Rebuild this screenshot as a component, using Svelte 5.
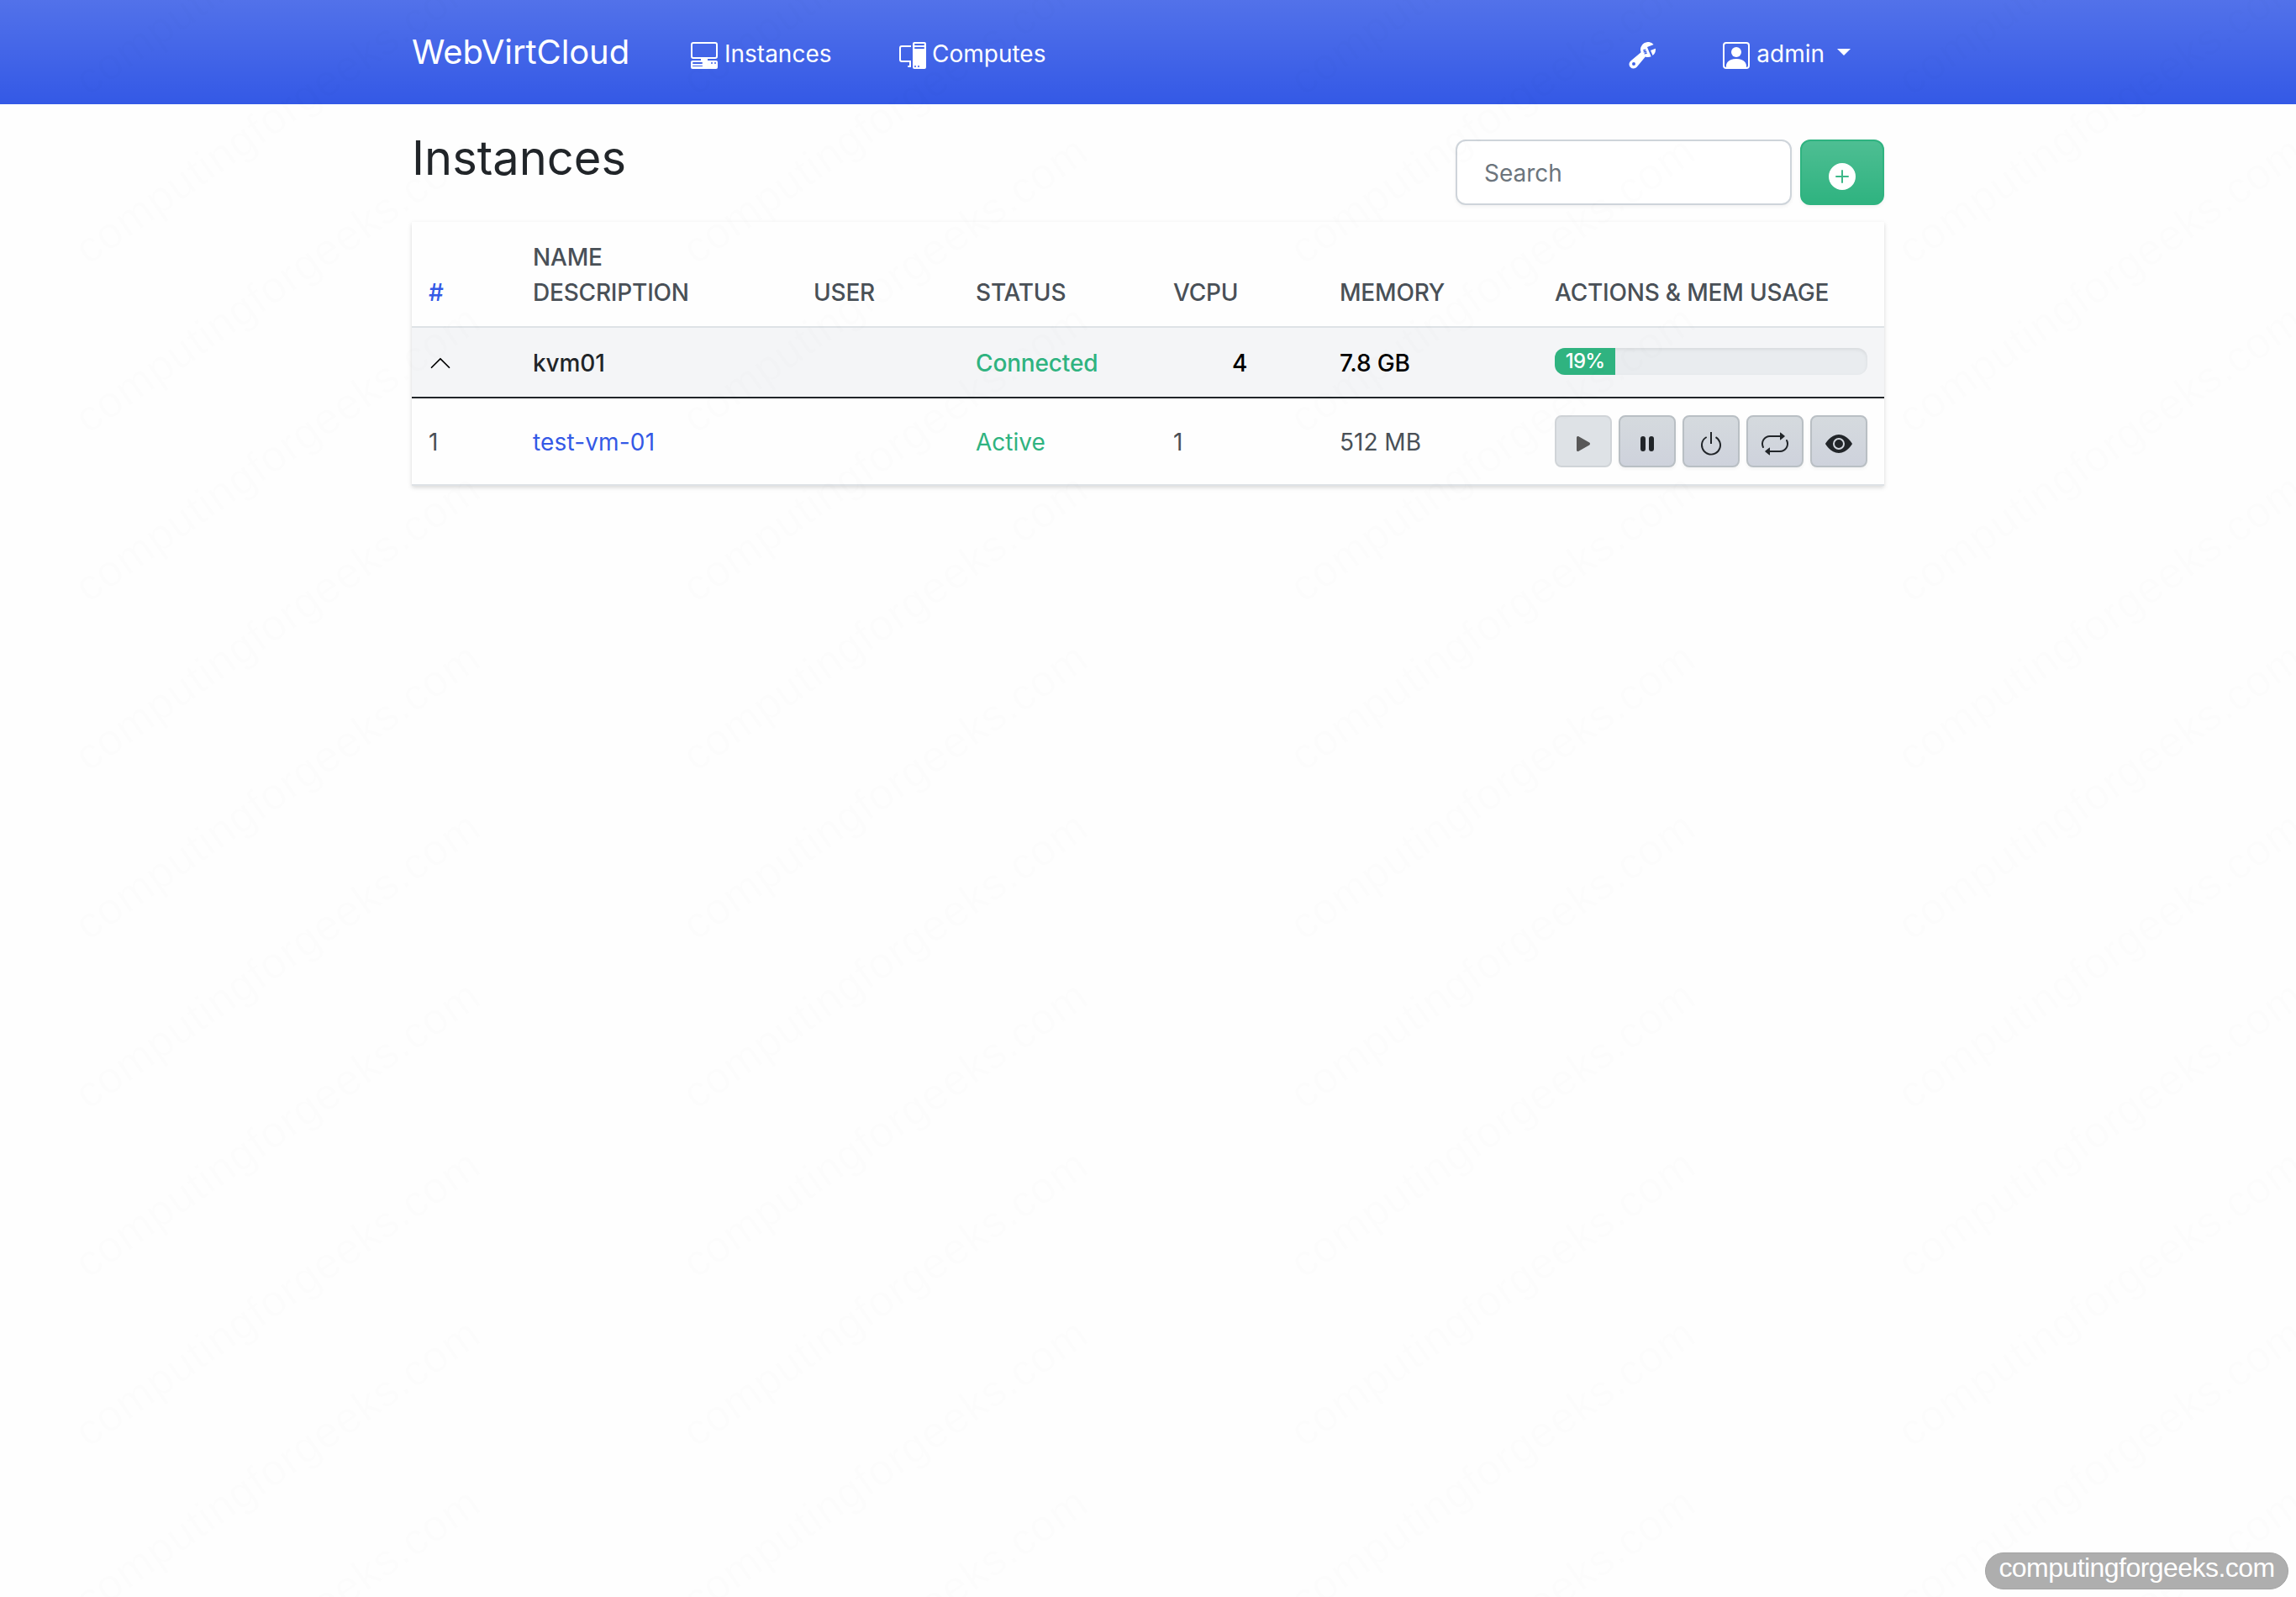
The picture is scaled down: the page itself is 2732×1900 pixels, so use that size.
<script lang="ts">
	import { tick } from 'svelte';

	type Action = { name: string; paths: string[]; disabled?: boolean };

	const columns = [124, 334, 193, 235, 198, 256, 412];

	const host = { name: 'kvm01', status: 'Connected', vcpu: 4, memory: '7.8 GB', usage: 19 };
	const instances = [
		{ id: 1, name: 'test-vm-01', user: '', status: 'Active', vcpu: 1, memory: '512 MB' }
	];

	const actions: Action[] = [
		{
			name: 'Power On',
			disabled: true,
			paths: [
				'm11.596 8.697-6.363 3.692c-.54.313-1.233-.066-1.233-.697V4.308c0-.63.692-1.01 1.233-.696l6.363 3.692a.802.802 0 0 1 0 1.393z'
			]
		},
		{
			name: 'Suspend',
			paths: [
				'M5.5 3.5A1.5 1.5 0 0 1 7 5v6a1.5 1.5 0 0 1-3 0V5a1.5 1.5 0 0 1 1.5-1.5zm5 0A1.5 1.5 0 0 1 12 5v6a1.5 1.5 0 0 1-3 0V5a1.5 1.5 0 0 1 1.5-1.5z'
			]
		},
		{
			name: 'Power Off',
			paths: [
				'M7.5 1v7h1V1h-1z',
				'M3 8.812a4.999 4.999 0 0 1 2.578-4.375l-.485-.874A6 6 0 1 0 11 3.616l-.501.865A5 5 0 1 1 3 8.812z'
			]
		},
		{
			name: 'Power Cycle',
			paths: [
				'M11 5.466V4H5a4 4 0 0 0-3.584 5.777.5.5 0 1 1-.896.446A5 5 0 0 1 5 3h6V1.534a.25.25 0 0 1 .41-.192l2.36 1.966c.12.1.12.284 0 .384l-2.36 1.966a.25.25 0 0 1-.41-.192Zm3.81.086a.5.5 0 0 1 .67.225A5 5 0 0 1 11 13H5v1.466a.25.25 0 0 1-.41.192l-2.36-1.966a.25.25 0 0 1 0-.384l2.36-1.966a.25.25 0 0 1 .41.192V12h6a4 4 0 0 0 3.585-5.777.5.5 0 0 1 .225-.67Z'
			]
		},
		{
			name: 'VNC Console',
			paths: [
				'M10.5 8a2.5 2.5 0 1 1-5 0 2.5 2.5 0 0 1 5 0z',
				'M0 8s3-5.5 8-5.5S16 8 16 8s-3 5.5-8 5.5S0 8 0 8zm8 3.5a3.5 3.5 0 1 0 0-7 3.5 3.5 0 0 0 0 7z'
			]
		}
	];

	let search = $state('');
	let expanded = $state(true);
	let search_box: HTMLInputElement;

	const visible = $derived(instances.filter((vm) => vm.name.includes(search.trim())));

	async function on_key_down(event: KeyboardEvent) {
		if (event.key === 'Escape') {
			search = '';
			await tick();
			search_box.blur();
		}
	}

	// Diagonal site mark, tiled over the whole page
	const marks: { x: number; y: number }[] = [];
	for (let col = 0; col < 4; col++) {
		for (let row = 0; row < 11; row++) {
			marks.push({ x: 105 + col * 723, y: 115 + row * 201 });
		}
	}
</script>

{#snippet icon(paths: string[])}
	<svg class="icon" viewBox="0 0 16 16" fill="currentColor" aria-hidden="true">
		{#each paths as d}
			<path {d} />
		{/each}
	</svg>
{/snippet}

<div class="page">
	<nav class="navbar">
		<div class="container nav-inner">
			<a class="brand" href="#/">WebVirtCloud</a>
			<a class="nav-link instances" href="#/instances">
				{@render icon([
					'M1.5 0A1.5 1.5 0 0 0 0 1.5v7A1.5 1.5 0 0 0 1.5 10H6v1H1a1 1 0 0 0-1 1v3a1 1 0 0 0 1 1h14a1 1 0 0 0 1-1v-3a1 1 0 0 0-1-1h-5v-1h4.5A1.5 1.5 0 0 0 16 8.5v-7A1.5 1.5 0 0 0 14.5 0h-13Zm0 1h13a.5.5 0 0 1 .5.5v7a.5.5 0 0 1-.5.5h-13a.5.5 0 0 1-.5-.5v-7a.5.5 0 0 1 .5-.5ZM12 12.5a.5.5 0 1 1 1 0 .5.5 0 0 1-1 0Zm2 0a.5.5 0 1 1 1 0 .5.5 0 0 1-1 0ZM1.5 12h5a.5.5 0 0 1 0 1h-5a.5.5 0 0 1 0-1ZM1 14.25a.25.25 0 0 1 .25-.25h5.5a.25.25 0 1 1 0 .5h-5.5a.25.25 0 0 1-.25-.25Z'
				])}
				<span>Instances</span>
			</a>
			<a class="nav-link computes" href="#/computes">
				{@render icon([
					'M8 1a1 1 0 0 1 1-1h6a1 1 0 0 1 1 1v14a1 1 0 0 1-1 1H9a1 1 0 0 1-1-1V1Zm1 13.5a.5.5 0 1 0 1 0 .5.5 0 0 0-1 0Zm2 0a.5.5 0 1 0 1 0 .5.5 0 0 0-1 0ZM9.5 1a.5.5 0 0 0 0 1h5a.5.5 0 0 0 0-1h-5ZM9 3.5a.5.5 0 0 0 .5.5h5a.5.5 0 0 0 0-1h-5a.5.5 0 0 0-.5.5ZM1.5 2A1.5 1.5 0 0 0 0 3.5v7A1.5 1.5 0 0 0 1.5 12H6v2h-.5a.5.5 0 0 0 0 1H7v-4H1.5a.5.5 0 0 1-.5-.5v-7a.5.5 0 0 1 .5-.5H7V2H1.5Z'
				])}
				<span>Computes</span>
			</a>
			<a class="nav-link settings" href="#/settings" aria-label="Settings">
				{@render icon([
					'M16 4.5a4.492 4.492 0 0 1-1.703 3.526L13 5l2.959-1.11c.027.2.041.403.041.61Z',
					'M11.5 9c.653 0 1.273-.139 1.833-.39L12 5.5 11 3l3.826-1.53A4.5 4.5 0 0 0 7.29 6.092l-6.116 5.096a2.583 2.583 0 1 0 3.638 3.638L9.908 8.71A4.49 4.49 0 0 0 11.5 9Zm-1.292-4.361-.596.893.809-.27a.25.25 0 0 1 .287.377l-.596.893.809-.27.158.475-1.5.5a.25.25 0 0 1-.287-.376l.596-.893-.809.27a.25.25 0 0 1-.287-.377l.596-.893-.809.27-.158-.475 1.5-.5a.25.25 0 0 1 .287.376ZM3 14a1 1 0 1 1 0-2 1 1 0 0 1 0 2Z'
				])}
			</a>
			<a class="nav-link user" href="#/profile">
				{@render icon([
					'M11 6a3 3 0 1 1-6 0 3 3 0 0 1 6 0z',
					'M2 0a2 2 0 0 0-2 2v12a2 2 0 0 0 2 2h12a2 2 0 0 0 2-2V2a2 2 0 0 0-2-2H2zm12 1a1 1 0 0 1 1 1v12a1 1 0 0 1-1 1v-1c0-1-1-4-6-4s-6 3-6 4v1a1 1 0 0 1-1-1V2a1 1 0 0 1 1-1h12z'
				])}
				<span>admin</span>
				<i class="caret"></i>
			</a>
		</div>
	</nav>

	<main class="container">
		<header class="heading">
			<h3>Instances</h3>
			<div class="tools">
				<input
					type="text"
					placeholder="Search"
					bind:value={search}
					bind:this={search_box}
					onkeydown={on_key_down}
				/>
				<button class="add" aria-label="Add instance">
					{@render icon([
						'M16 8A8 8 0 1 1 0 8a8 8 0 0 1 16 0zM8.5 4.5a.5.5 0 0 0-1 0v3h-3a.5.5 0 0 0 0 1h3v3a.5.5 0 0 0 1 0v-3h3a.5.5 0 0 0 0-1h-3v-3z'
					])}
				</button>
			</div>
		</header>

		<table>
			<colgroup>
				{#each columns as width}
					<col style="width: {width}px" />
				{/each}
			</colgroup>
			<thead>
				<tr>
					<th class="primary">#</th>
					<th>Name<br />Description</th>
					<th>User</th>
					<th>Status</th>
					<th>VCPU</th>
					<th>Memory</th>
					<th>Actions &amp; Mem Usage</th>
				</tr>
			</thead>
			<tbody>
				<tr class="host">
					<td>
						<button class="toggle" aria-label="Toggle" onclick={() => (expanded = !expanded)}>
							{@render icon([
								'M7.646 4.646a.5.5 0 0 1 .708 0l6 6a.5.5 0 0 1-.708.708L8 5.707l-5.646 5.647a.5.5 0 0 1-.708-.708l6-6z'
							])}
						</button>
					</td>
					<td class="host-name">{host.name}</td>
					<td></td>
					<td class="success">{host.status}</td>
					<td class="center">{host.vcpu}</td>
					<td>{host.memory}</td>
					<td>
						<div class="progress">
							<div class="bar" style="width: {host.usage}%">{host.usage}%</div>
						</div>
					</td>
				</tr>
				{#if expanded}
					{#each visible as vm}
						<tr>
							<td>{vm.id}</td>
							<td><a class="primary" href="#/instances/{vm.id}">{vm.name}</a></td>
							<td>{vm.user}</td>
							<td class="success">{vm.status}</td>
							<td>{vm.vcpu}</td>
							<td>{vm.memory}</td>
							<td>
								<div class="actions">
									{#each actions as action}
										<button disabled={action.disabled} aria-label={action.name}>
											{@render icon(action.paths)}
										</button>
									{/each}
								</div>
							</td>
						</tr>
					{/each}
				{/if}
			</tbody>
		</table>
	</main>

	<svg class="marks" width="2732" height="1900" aria-hidden="true">
		{#each marks as { x, y }}
			<text transform="translate({x} {y}) rotate(-35)" textLength="573">computingforgeeks.com</text>
		{/each}
	</svg>
	<div class="site-badge">computingforgeeks.com</div>
</div>

<style>
	:global(body) {
		background: #fefefe;
	}

	.page {
		position: relative;
		height: 1900px;
		overflow: hidden;

		font-family: Inter, 'Liberation Sans', sans-serif;
		font-size: 28px;
		line-height: 42px;
		color: #495057;
	}

	a {
		text-decoration: none;
	}

	.icon {
		display: block;
		flex: none;
		width: 32px;
		height: 32px;
	}

	.container {
		width: 1752px;
		margin: 0 auto;
	}

	.navbar {
		height: 124px;
		background: #3459e6 linear-gradient(180deg, rgba(255, 255, 255, 0.15), rgba(255, 255, 255, 0));
	}

	.nav-inner {
		display: flex;
		align-items: center;
		height: 100%;
	}

	.brand {
		width: 332px;
		color: #fff;
		font-size: 40px;
		letter-spacing: -0.1px;
		line-height: 60px;
	}

	.nav-link {
		display: flex;
		gap: 8px;
		height: 32px;
		color: #fff;
		padding-top: 8px;
	}

	.nav-link span {
		margin-top: -7px;
	}

	.instances {
		width: 248px;
	}

	.computes {
		gap: 7px;
	}

	.settings {
		margin-left: auto;
	}

	.user {
		margin-left: 80px;
		margin-right: 40px;
	}

	.caret {
		margin: 8px 0 0 7px;
		width: 0;
		height: 0;
		border: 8px solid transparent;
		border-top-color: #fff;
		border-bottom: 0;
	}

	.heading {
		display: flex;
		justify-content: space-between;
		height: 140px;
	}

	h3 {
		margin: 31px 0 0;
		font-size: 56px;
		font-weight: 400;
		line-height: 67px;
		color: #212529;
	}

	.tools {
		display: flex;
		gap: 10px;
		padding-top: 42px;
	}

	input {
		box-sizing: border-box;
		width: 400px;
		height: 78px;
		padding: 2px 32px 0;

		font: inherit;
		color: #495057;
		background: #fff;
		border: 2px solid #ced4da;
		border-radius: 12px;
		box-shadow: 0 2px 4px rgba(0, 0, 0, 0.05);
	}

	input::placeholder {
		color: #6c757d;
		opacity: 1;
	}

	.add {
		display: flex;
		justify-content: center;
		box-sizing: border-box;
		width: 100px;
		height: 78px;
		padding: 26px 0 0;

		color: #fff;
		background: #2fb380 linear-gradient(180deg, rgba(255, 255, 255, 0.15), rgba(255, 255, 255, 0));
		border: 2px solid #2fb380;
		border-radius: 12px;
		box-shadow: 0 2px 4px rgba(0, 0, 0, 0.05);
	}

	table {
		width: 1752px;
		table-layout: fixed;
		border-collapse: separate;
		border-spacing: 0;
		box-shadow:
			0 2px 6px rgba(0, 0, 0, 0.1),
			0 2px 4px rgba(0, 0, 0, 0.06);
	}

	th,
	td {
		padding: 21px 20px 19px;
		text-align: left;
		border-bottom: 2px solid #dee2e6;
	}

	th {
		font-weight: 500;
		letter-spacing: -0.2px;
		text-transform: uppercase;
		vertical-align: bottom;
	}

	.host td {
		height: 42px;
		color: #000;
		font-weight: 500;
		letter-spacing: -0.15px;
		background: #f4f5f7;
		border-bottom-color: #212529;
	}

	.host .host-name {
		color: #212529;
	}

	th.primary,
	a.primary {
		color: #3459e6;
	}

	a.primary {
		letter-spacing: 0.15px;
	}

	td.success,
	.host td.success {
		color: #2fb380;
	}

	td.center {
		text-align: center;
	}

	.toggle {
		display: block;
		padding: 0;
		color: #000;
		background: none;
		border: 0;
	}

	.toggle .icon {
		width: 28px;
		height: 28px;
	}

	.progress {
		height: 32px;
		margin: 3px 0 7px;
		overflow: hidden;
		background: #e9ecef;
		border-radius: 12px;
		box-shadow: inset 0 2px 4px rgba(0, 0, 0, 0.075);
	}

	.bar {
		min-width: 72px;
		color: #fff;
		font-size: 24px;
		letter-spacing: -0.8px;
		line-height: 31px;
		text-align: center;
		background: #2fb380;
		height: 32px;
	}

	.actions {
		display: flex;
		gap: 8px;
		margin: -1px 0 1px;
	}

	.actions button {
		display: flex;
		justify-content: center;
		box-sizing: border-box;
		width: 68px;
		height: 62px;
		padding: 16px 0 0;

		color: #212529;
		background: #ced4da linear-gradient(180deg, #d5dade, #ced2dc);
		border: 2px solid #b9bfc4;
		border-radius: 8px;
		box-shadow: 0 2px 4px rgba(0, 0, 0, 0.05);
	}

	.actions button:disabled {
		color: #000;
		background: #ced4da;
		box-shadow: none;
		opacity: 0.65;
	}

	.marks {
		position: absolute;
		top: 0;
		left: 0;
		pointer-events: none;
	}

	.marks text {
		font-family: 'Liberation Sans', Arial, sans-serif;
		font-size: 52px;
		fill: rgba(0, 0, 0, 0.007);
	}

	.site-badge {
		position: absolute;
		right: 9px;
		bottom: 9px;
		box-sizing: border-box;
		width: 361px;
		height: 44px;

		font-family: 'Liberation Sans', Arial, sans-serif;
		font-size: 32px;
		letter-spacing: -0.55px;
		line-height: 35px;
		text-align: center;
		color: #fff;
		background: #aeaeae;
		border: 1px solid #a4a4a4;
		border-radius: 22px;
	}
</style>
